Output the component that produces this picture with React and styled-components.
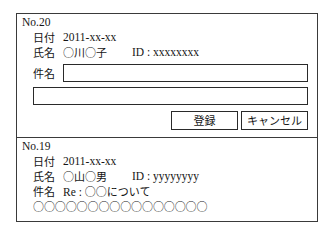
import React from 'react';
import styled, { createGlobalStyle } from 'styled-components';

const GlobalStyle = createGlobalStyle`
  html, body {
    margin: 0;
    padding: 0;
    background: #ffffff;
  }
  body {
    font-family: "Liberation Serif", "Noto Sans CJK JP", serif;
    font-size: 11.5px;
    color: #151515;
  }
`;

const Frame = styled.div`
  box-sizing: border-box;
  width: 302px;
  margin: 13px 0 0 16px;
  border: 1px solid #3a3a3a;
`;

const Section = styled.div`
  padding: ${(p) => (p.$editing ? '1px 9px 7px 5px' : '1px 9px 7px 5px')};
  border-bottom: ${(p) => (p.$editing ? '1px solid #3a3a3a' : 'none')};
`;

const Number = styled.div`
  line-height: 15px;
  height: 15px;
`;

const Row = styled.div`
  display: flex;
  align-items: center;
  padding-left: 11px;
  height: ${(p) => p.$h || 15}px;
  margin-top: ${(p) => p.$gap || 0}px;
`;

const Label = styled.span`
  width: 30px;
  flex: none;
  font-family: "Noto Sans CJK JP", sans-serif;
  font-size: 11px;
  line-height: 15px;
`;

const Value = styled.span`
  width: ${(p) => (p.$w ? `${p.$w}px` : 'auto')};
  flex: none;
  white-space: nowrap;
  line-height: 15px;
`;

const Jp = styled.span`
  font-family: "Noto Sans CJK JP", sans-serif;
  font-size: 11px;
  line-height: 15px;
`;

const TextBox = styled.div`
  box-sizing: border-box;
  flex: 1;
  height: 18px;
  border: 1px solid #2a2a2a;
  background: #fff;
`;

const WideBox = styled(TextBox)`
  width: calc(100% - 11px);
  margin: 5px 0 0 11px;
`;

const Buttons = styled.div`
  display: flex;
  justify-content: flex-end;
  gap: 3px;
  margin-top: 6px;
`;

const Button = styled.button`
  box-sizing: border-box;
  width: 67px;
  height: 19px;
  padding: 0;
  border: 1px solid #2a2a2a;
  background: #fff;
  color: #151515;
  font-family: "Noto Sans CJK JP", sans-serif;
  font-size: 11px;
  line-height: 17px;
`;

const Circles = styled.div`
  padding-left: 11px;
  height: 15px;
  line-height: 15px;
  font-family: "Noto Sans CJK JP", sans-serif;
  font-size: 11px;
  letter-spacing: -0.1px;
  color: #222;
`;

export default function App() {
  return (
    <>
      <GlobalStyle />
      <Frame>
        <Section $editing>
          <Number>No.20</Number>
          <Row>
            <Label>日付</Label>
            <Value>2011-xx-xx</Value>
          </Row>
          <Row>
            <Label>氏名</Label>
            <Value $w={69}><Jp>○川○子</Jp></Value>
            <Value>ID : xxxxxxxx</Value>
          </Row>
          <Row $gap={4} $h={18}>
            <Label>件名</Label>
            <TextBox />
          </Row>
          <WideBox />
          <Buttons>
            <Button>登録</Button>
            <Button>キャンセル</Button>
          </Buttons>
        </Section>
        <Section>
          <Number>No.19</Number>
          <Row>
            <Label>日付</Label>
            <Value>2011-xx-xx</Value>
          </Row>
          <Row>
            <Label>氏名</Label>
            <Value $w={69}><Jp>○山○男</Jp></Value>
            <Value>ID : yyyyyyyy</Value>
          </Row>
          <Row>
            <Label>件名</Label>
            <Value>Re : <Jp>○○について</Jp></Value>
          </Row>
          <Circles>○○○○○○○○○○○○○○○○</Circles>
        </Section>
      </Frame>
    </>
  );
}
